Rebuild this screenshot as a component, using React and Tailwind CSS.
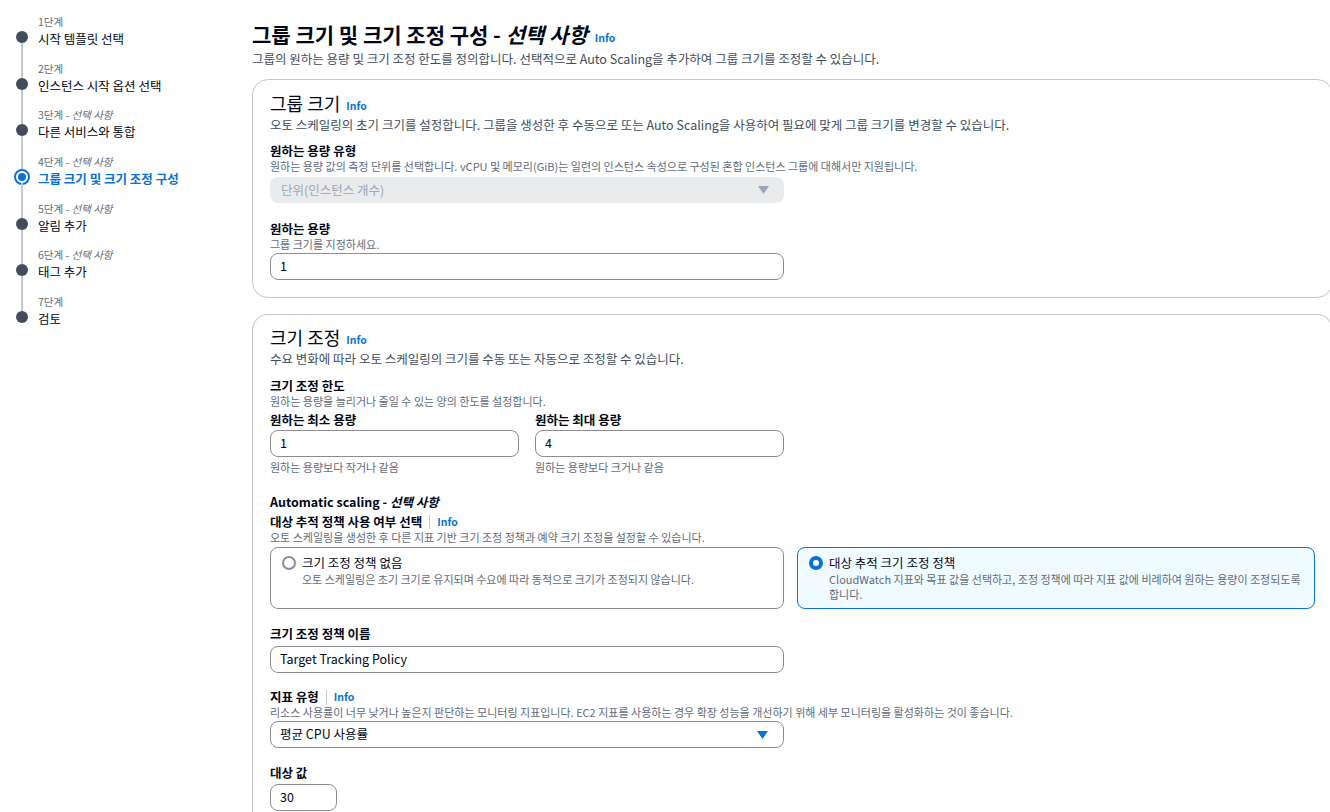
import React from 'react';

const font = { fontFamily: '"Noto Sans CJK KR", "Noto Sans", sans-serif' };

const steps = [
  { label: '1단계', title: '시작 템플릿 선택' },
  { label: '2단계', title: '인스턴스 시작 옵션 선택' },
  { label: '3단계', optional: true, title: '다른 서비스와 통합' },
  { label: '4단계', optional: true, title: '그룹 크기 및 크기 조정 구성', active: true },
  { label: '5단계', optional: true, title: '알림 추가' },
  { label: '6단계', optional: true, title: '태그 추가' },
  { label: '7단계', title: '검토' },
];

const Info = ({ bar }) => (
  <span className="inline-flex items-center">
    {bar && <span className="mx-[7px] h-[14px] w-px bg-[#c6c6cd]" />}
    <span className="text-[10.5px] font-bold text-[#0972d3]">Info</span>
  </span>
);

const Caret = ({ color }) => (
  <svg width="11" height="8" viewBox="0 0 11 8">
    <path d="M0 0 L11 0 L5.5 8 Z" fill={color} />
  </svg>
);

const TextInput = ({ value, w = 'w-[514px]' }) => (
  <div className={`${w} h-[27px] rounded-[8px] border border-[#8c8c94] bg-white px-[9px] flex items-center text-[12.5px] text-[#000716]`}>
    {value}
  </div>
);

const Label = ({ children }) => (
  <div className="text-[12.5px] font-bold leading-[16px] text-[#000716]">{children}</div>
);

const Desc = ({ children }) => (
  <div className="text-[11px] leading-[15px] text-[#5f6b7a] break-keep">{children}</div>
);

const Sidebar = () => (
  <div className="w-[252px] shrink-0 pl-[11px] pt-[13px]">
    {steps.map((s, i) => (
      <div key={i} className="flex">
        <div className="relative w-[22px] flex flex-col items-center">
          <div className={`w-[2px] h-[18px] ${i === 0 ? 'bg-transparent' : 'bg-[#c6c6cd]'}`} />
          {s.active ? (
            <div className="w-[16px] h-[16px] rounded-full border-[2px] border-[#0972d3] flex items-center justify-center my-[-2px]">
              <div className="w-[8px] h-[8px] rounded-full bg-[#0972d3]" />
            </div>
          ) : (
            <div className="w-[12px] h-[12px] rounded-full bg-[#414d5c]" />
          )}
          <div className={`w-[2px] h-[16.67px] ${i === steps.length - 1 ? 'bg-transparent' : 'bg-[#c6c6cd]'}`} />
        </div>
        <div className="pl-[5px]">
          <div className="text-[10.5px] leading-[16px] text-[#5f6b7a] mt-[1px]">
            {s.label}
            {s.optional && <> - <i>선택 사항</i></>}
          </div>
          <div className={`text-[12.5px] leading-[18px] ${s.active ? 'font-bold text-[#0972d3]' : 'text-[#000716]'}`}>
            {s.title}
          </div>
        </div>
      </div>
    ))}
  </div>
);

const RadioCard = ({ checked, title, desc, w }) => (
  <div className={`${w} h-[62px] rounded-[8px] border px-[11px] pt-[6px] flex gap-[6px] ${checked ? 'border-[#0972d3] bg-[#f0fbff]' : 'border-[#8c8c94] bg-white'}`}>
    <div className="pt-[2px] shrink-0">
      {checked ? (
        <div className="w-[14px] h-[14px] rounded-full border-[4px] border-[#0972d3] bg-white" />
      ) : (
        <div className="w-[14px] h-[14px] rounded-full border-[2px] border-[#8c8c94] bg-white" />
      )}
    </div>
    <div>
      <div className="text-[12.5px] leading-[18px] text-[#000716]">{title}</div>
      <div className="text-[11px] leading-[15px] text-[#5f6b7a] break-keep">{desc}</div>
    </div>
  </div>
);

export default function App() {
  return (
    <div className="flex bg-white w-[1330px] h-[812px] overflow-hidden" style={font}>
      <Sidebar />
      <div className="flex-1 pt-[20px]">
        <h1 className="text-[21px] font-bold leading-[28px] text-[#000716] flex items-end gap-[7px]">
          <span>그룹 크기 및 크기 조정 구성 - <i>선택 사항</i></span>
          <span className="pb-[3px] leading-[14px]"><Info /></span>
        </h1>
        <p className="text-[12.5px] leading-[18px] text-[#414d5c] mt-[2px]">
          그룹의 원하는 용량 및 크기 조정 한도를 정의합니다. 선택적으로 Auto Scaling을 추가하여 그룹 크기를 조정할 수 있습니다.
        </p>

        {/* 그룹 크기 */}
        <div className="mt-[11px] mr-[-1px] rounded-[16px] border border-[#c6c6cd] px-[17px] pt-[11px] pb-[17px]">
          <div className="flex items-end gap-[6px]">
            <span className="text-[18px] leading-[25px] text-[#000716]">그룹 크기</span>
            <span className="pb-[3px] leading-[14px]"><Info /></span>
          </div>
          <div className="text-[12.5px] leading-[18px] text-[#414d5c]">
            오토 스케일링의 초기 크기를 설정합니다. 그룹을 생성한 후 수동으로 또는 Auto Scaling을 사용하여 필요에 맞게 그룹 크기를 변경할 수 있습니다.
          </div>

          <div className="mt-[9px]">
            <Label>원하는 용량 유형</Label>
            <Desc>원하는 용량 값의 측정 단위를 선택합니다. vCPU 및 메모리(GiB)는 일련의 인스턴스 속성으로 구성된 혼합 인스턴스 그룹에 대해서만 지원됩니다.</Desc>
            <div className="mt-[3px] w-[514px] h-[26px] rounded-[8px] bg-[#e9ebed] px-[11px] flex items-center justify-between text-[12.5px] text-[#9ba7b6]">
              <span>단위(인스턴스 개수)</span>
              <span className="pr-[4px]"><Caret color="#9ba7b6" /></span>
            </div>
          </div>

          <div className="mt-[18px]">
            <Label>원하는 용량</Label>
            <Desc>그룹 크기를 지정하세요.</Desc>
            <div className="mt-[1px]"><TextInput value="1" /></div>
          </div>
        </div>

        {/* 크기 조정 */}
        <div className="mt-[16px] mr-[-1px] rounded-t-[16px] border border-b-0 border-[#c6c6cd] px-[17px] pt-[10px] h-[520px]">
          <div className="flex items-end gap-[6px]">
            <span className="text-[18px] leading-[25px] text-[#000716]">크기 조정</span>
            <span className="pb-[3px] leading-[14px]"><Info /></span>
          </div>
          <div className="text-[12.5px] leading-[18px] text-[#414d5c]">
            수요 변화에 따라 오토 스케일링의 크기를 수동 또는 자동으로 조정할 수 있습니다.
          </div>

          <div className="mt-[10px]">
            <Label>크기 조정 한도</Label>
            <Desc>원하는 용량을 늘리거나 줄일 수 있는 양의 한도를 설정합니다.</Desc>
            <div className="flex gap-[16px] mt-[3px]">
              <div>
                <Label>원하는 최소 용량</Label>
                <div className="mt-[2px]"><TextInput value="1" w="w-[249px]" /></div>
                <div className="mt-[3px]"><Desc>원하는 용량보다 작거나 같음</Desc></div>
              </div>
              <div>
                <Label>원하는 최대 용량</Label>
                <div className="mt-[2px]"><TextInput value="4" w="w-[249px]" /></div>
                <div className="mt-[3px]"><Desc>원하는 용량보다 크거나 같음</Desc></div>
              </div>
            </div>
          </div>

          <div className="mt-[19px]">
            <Label>Automatic scaling - <i>선택 사항</i></Label>
            <div className="flex items-center mt-[4px]">
              <Label>대상 추적 정책 사용 여부 선택</Label>
              <Info bar />
            </div>
            <Desc>오토 스케일링을 생성한 후 다른 지표 기반 크기 조정 정책과 예약 크기 조정을 설정할 수 있습니다.</Desc>
            <div className="flex gap-[13px] mt-[2px]">
              <RadioCard
                w="w-[514px]"
                title="크기 조정 정책 없음"
                desc="오토 스케일링은 초기 크기로 유지되며 수요에 따라 동적으로 크기가 조정되지 않습니다."
              />
              <RadioCard
                w="w-[518px]"
                checked
                title="대상 추적 크기 조정 정책"
                desc="CloudWatch 지표와 목표 값을 선택하고, 조정 정책에 따라 지표 값에 비례하여 원하는 용량이 조정되도록 합니다."
              />
            </div>
          </div>

          <div className="mt-[17px]">
            <Label>크기 조정 정책 이름</Label>
            <div className="mt-[4px]"><TextInput value="Target Tracking Policy" /></div>
          </div>

          <div className="mt-[16px]">
            <div className="flex items-center">
              <Label>지표 유형</Label>
              <Info bar />
            </div>
            <Desc>리소스 사용률이 너무 낮거나 높은지 판단하는 모니터링 지표입니다. EC2 지표를 사용하는 경우 확장 성능을 개선하기 위해 세부 모니터링을 활성화하는 것이 좋습니다.</Desc>
            <div className="mt-[1px] w-[514px] h-[27px] rounded-[8px] border border-[#8c8c94] bg-white px-[9px] flex items-center justify-between text-[12.5px] text-[#000716]">
              <span>평균 CPU 사용률</span>
              <span className="pr-[6px]"><Caret color="#0972d3" /></span>
            </div>
          </div>

          <div className="mt-[17px]">
            <Label>대상 값</Label>
            <div className="mt-[3px]"><TextInput value="30" w="w-[67px]" /></div>
          </div>
        </div>
      </div>
    </div>
  );
}
